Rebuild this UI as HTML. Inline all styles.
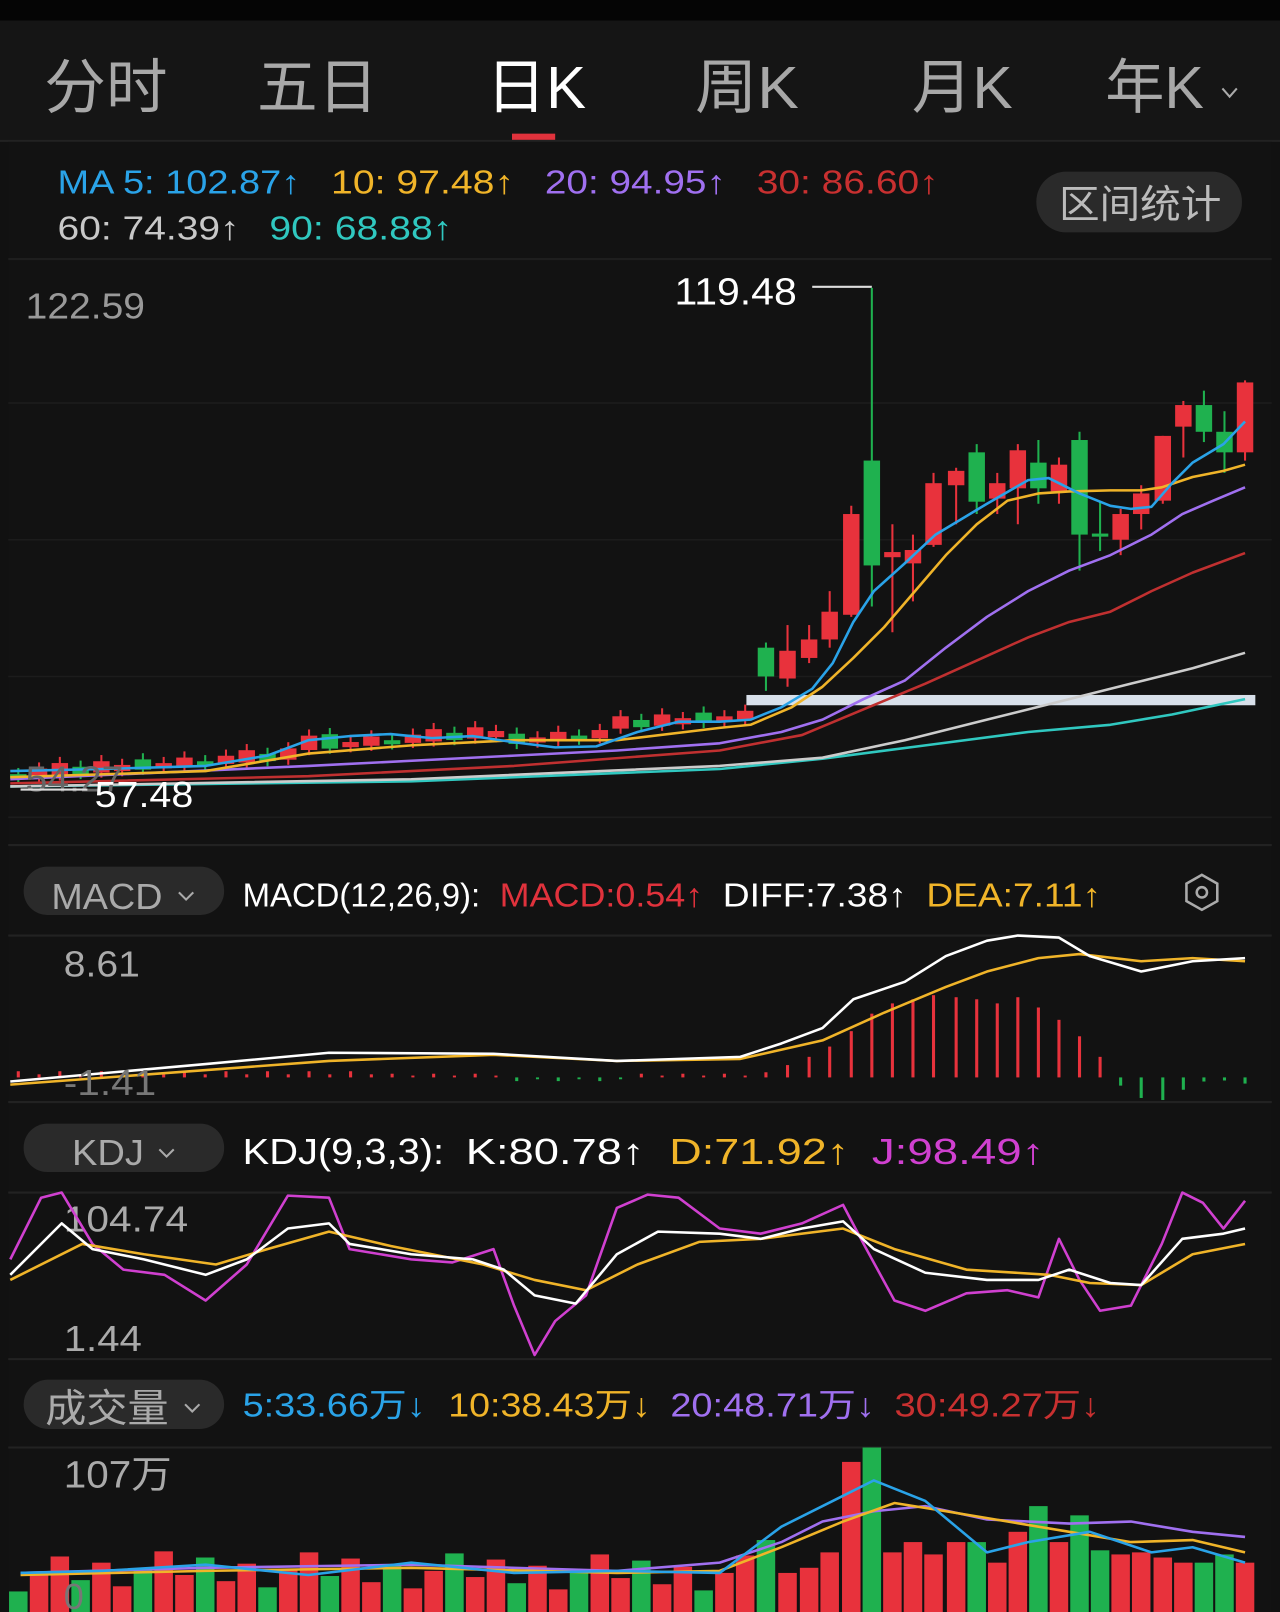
<!DOCTYPE html>
<html><head><meta charset="utf-8"><style>
html,body{margin:0;padding:0;background:#111;}
svg{display:block;}
text{font-family:"Liberation Sans","Noto Sans CJK SC",sans-serif;}
</style></head><body>
<svg id="s" width="1280" height="1612" viewBox="0 0 1245 1568" preserveAspectRatio="none" xmlns="http://www.w3.org/2000/svg">
<rect x="0" y="0" width="1245" height="1568" fill="#111111"/>
<rect x="0" y="0" width="1245" height="20" fill="#050505"/>
<rect x="0" y="20" width="1245" height="116" fill="#151515"/>
<line x1="0" y1="137" x2="1245" y2="137" fill="none" stroke="#222" stroke-width="2"/>
<g font-size="58" fill="#a8a8a8" lengthAdjust="spacingAndGlyphs">
<text x="43" y="105" textLength="120" lengthAdjust="spacingAndGlyphs">分时</text>
<text x="250" y="105" textLength="118" lengthAdjust="spacingAndGlyphs">五日</text>
<text x="473" y="105" fill="#fff" textLength="97" lengthAdjust="spacingAndGlyphs">日K</text>
<text x="676" y="105" textLength="101" lengthAdjust="spacingAndGlyphs">周K</text>
<text x="887" y="105" textLength="98" lengthAdjust="spacingAndGlyphs">月K</text>
<text x="1075" y="105" textLength="96" lengthAdjust="spacingAndGlyphs">年K</text>
</g>
<path d="M1189 86 L1196 94 L1203 86" stroke="#aaa" stroke-width="2" fill="none"/>
<rect x="498" y="130" width="42" height="6" fill="#e0323c"/>
<rect x="8" y="138" width="1229" height="1430" fill="#121212"/>
<g font-size="32">
<text x="56" y="188" fill="#2aa3e8" textLength="236" lengthAdjust="spacingAndGlyphs">MA 5: 102.87↑</text>
<text x="322" y="188" fill="#f0b429" textLength="178" lengthAdjust="spacingAndGlyphs">10: 97.48↑</text>
<text x="530" y="188" fill="#a070f0" textLength="176" lengthAdjust="spacingAndGlyphs">20: 94.95↑</text>
<text x="736" y="188" fill="#c83030" textLength="177" lengthAdjust="spacingAndGlyphs">30: 86.60↑</text>
<text x="56" y="233" fill="#c8c8c8" textLength="177" lengthAdjust="spacingAndGlyphs">60: 74.39↑</text>
<text x="262" y="233" fill="#30c8c0" textLength="178" lengthAdjust="spacingAndGlyphs">90: 68.88↑</text>
</g>
<rect x="1008" y="167" width="200" height="59" rx="29" fill="#2a2a2a"/>
<text x="1030" y="212" font-size="38" fill="#bbb" textLength="158" lengthAdjust="spacingAndGlyphs">区间统计</text>
<line x1="8" y1="252" x2="1237" y2="252" stroke="#1e1e1e" stroke-width="2"/>
<g stroke="#1c1c1c" stroke-width="1.5">
<line x1="8" y1="392" x2="1237" y2="392"/><line x1="8" y1="525" x2="1237" y2="525"/><line x1="8" y1="658" x2="1237" y2="658"/><line x1="8" y1="795" x2="1237" y2="795"/>
</g>
<line x1="8" y1="822" x2="1237" y2="822" stroke="#222" stroke-width="2"/>
<text x="25" y="310" font-size="35" fill="#999" textLength="116" lengthAdjust="spacingAndGlyphs">122.59</text>
<text x="656" y="296" font-size="37" fill="#fff" textLength="119" lengthAdjust="spacingAndGlyphs">119.48</text>
<path d="M790 279 H848" stroke="#ddd" stroke-width="2"/>
<g id="candles"></g>
<rect x="726" y="676" width="495" height="10" fill="#d8e0ea"/>
<g id="ma" fill="none" stroke-width="2.5" stroke-linejoin="round"></g>
<text x="25" y="770" font-size="35" fill="#666" textLength="95" lengthAdjust="spacingAndGlyphs">54.27</text>
<path d="M20 768 H85" stroke="#ddd" stroke-width="2"/>
<text x="92" y="785" font-size="35" fill="#fff" textLength="96" lengthAdjust="spacingAndGlyphs">57.48</text>

<rect x="23" y="843" width="195" height="47" rx="23" fill="#2a2a2a"/>
<text x="50" y="884" font-size="35" fill="#aaa" textLength="108" lengthAdjust="spacingAndGlyphs">MACD</text>
<path d="M174 868 L181 875 L188 868" stroke="#aaa" stroke-width="2" fill="none"/>
<g font-size="32">
<text x="236" y="882" fill="#fff" textLength="231" lengthAdjust="spacingAndGlyphs">MACD(12,26,9):</text>
<text x="486" y="882" fill="#e0323c" textLength="198" lengthAdjust="spacingAndGlyphs">MACD:0.54↑</text>
<text x="703" y="882" fill="#fff" textLength="179" lengthAdjust="spacingAndGlyphs">DIFF:7.38↑</text>
<text x="901" y="882" fill="#f0b429" textLength="170" lengthAdjust="spacingAndGlyphs">DEA:7.11↑</text>
</g>
<path d="M1169 851 L1184 859.5 L1184 876.5 L1169 885 L1154 876.5 L1154 859.5 Z" stroke="#aaa" stroke-width="2.5" fill="none"/>
<circle cx="1169" cy="868" r="5" stroke="#aaa" stroke-width="2.5" fill="none"/>
<line x1="8" y1="910" x2="1237" y2="910" stroke="#222" stroke-width="2"/>
<text x="62" y="950" font-size="35" fill="#aaa" textLength="74" lengthAdjust="spacingAndGlyphs">8.61</text>
<g id="macd"></g>
<text x="62" y="1065" font-size="35" fill="#777" textLength="90" lengthAdjust="spacingAndGlyphs">-1.41</text>
<line x1="8" y1="1072" x2="1237" y2="1072" stroke="#222" stroke-width="2"/>

<rect x="23" y="1093" width="195" height="47" rx="23" fill="#2a2a2a"/>
<text x="70" y="1133" font-size="35" fill="#aaa" textLength="70" lengthAdjust="spacingAndGlyphs">KDJ</text>
<path d="M155 1118 L162 1125 L169 1118" stroke="#aaa" stroke-width="2" fill="none"/>
<g font-size="35">
<text x="236" y="1132" fill="#fff" textLength="196" lengthAdjust="spacingAndGlyphs">KDJ(9,3,3):</text>
<text x="453" y="1132" fill="#fff" textLength="174" lengthAdjust="spacingAndGlyphs">K:80.78↑</text>
<text x="651" y="1132" fill="#f0b429" textLength="175" lengthAdjust="spacingAndGlyphs">D:71.92↑</text>
<text x="848" y="1132" fill="#d040d0" textLength="168" lengthAdjust="spacingAndGlyphs">J:98.49↑</text>
</g>
<line x1="8" y1="1160" x2="1237" y2="1160" stroke="#222" stroke-width="2"/>
<text x="62" y="1198" font-size="35" fill="#aaa" textLength="121" lengthAdjust="spacingAndGlyphs">104.74</text>
<text x="62" y="1314" font-size="35" fill="#aaa" textLength="76" lengthAdjust="spacingAndGlyphs">1.44</text>
<g id="kdj" fill="none" stroke-width="2.5"></g>
<line x1="8" y1="1322" x2="1237" y2="1322" stroke="#222" stroke-width="2"/>

<rect x="23" y="1342" width="195" height="48" rx="24" fill="#2a2a2a"/>
<text x="44" y="1383" font-size="38" fill="#aaa" textLength="120" lengthAdjust="spacingAndGlyphs">成交量</text>
<path d="M180 1366 L187 1373 L194 1366" stroke="#aaa" stroke-width="2" fill="none"/>
<g font-size="32">
<text x="236" y="1378" fill="#2aa3e8" textLength="178" lengthAdjust="spacingAndGlyphs">5:33.66万↓</text>
<text x="436" y="1378" fill="#f0b429" textLength="197" lengthAdjust="spacingAndGlyphs">10:38.43万↓</text>
<text x="652" y="1378" fill="#a070f0" textLength="199" lengthAdjust="spacingAndGlyphs">20:48.71万↓</text>
<text x="870" y="1378" fill="#c83030" textLength="200" lengthAdjust="spacingAndGlyphs">30:49.27万↓</text>
</g>
<line x1="8" y1="1408" x2="1237" y2="1408" stroke="#222" stroke-width="2"/>
<g id="vol"></g>
<text x="62" y="1447" font-size="37" fill="#aaa" textLength="105" lengthAdjust="spacingAndGlyphs">107万</text>
<text x="62" y="1565" font-size="35" fill="#777">0</text>
</svg>
<script>
var NS="http://www.w3.org/2000/svg";
function el(p,t,a){var e=document.createElementNS(NS,t);for(var k in a)e.setAttribute(k,a[k]);document.getElementById(p).appendChild(e);return e;}
var R="#e8323c",G="#1fb14f";
var right=[[745,'g',630,658,625,672],[766,'r',633,660,608,668],[787,'r',622,640,608,645],[807,'r',595,622,575,630],[828,'r',500,598,492,600],[848,'g',448,550,280,590],[868,'r',537,542,510,615],[888,'r',535,548,520,585],[908,'r',470,530,460,532],[930,'r',458,472,455,510],[950,'g',440,488,432,500],[970,'r',470,485,460,500],[990,'r',438,475,432,510],[1010,'g',450,475,428,490],[1030,'r',452,478,445,490],[1050,'g',428,520,420,555],[1070,'g',519,522,488,536],[1090,'r',500,525,495,540],[1110,'r',480,500,472,515],[1131,'r',424,487,424,490],[1151,'r',394,415,390,445],[1171,'g',394,420,380,430],[1191,'g',420,440,400,460],[1211,'r',372,440,370,448]];
var cs=[];
var sp=20.2;
for(var i=0;i<36;i++){
 var x=745-(36-i)*sp;
 var base=757-(i/36)*50 - (i>13&&i<24?8:0) - (i>28?8:0);
 var c=(i*7%3==0)?'g':'r';
 var h=4+(i*13%9);
 if(i==14||i==15)h=14;
 cs.push([x,c,base-h,base,base-h-6,base+5]);
}
cs=cs.concat(right);
cs.forEach(function(d,i){
 var col=d[1]=='r'?R:G;
 el('candles','line',{x1:d[0],x2:d[0],y1:d[4],y2:d[5],stroke:col,'stroke-width':2});
 el('candles','rect',{x:d[0]-8,y:d[2],width:16,height:Math.max(2,d[3]-d[2]),fill:col});
 var v;
 if(i<36){v=1568-(20+((i*17)%40));}else{v=[1498,1530,1525,1510,1422,1408,1510,1500,1512,1500,1500,1520,1490,1465,1500,1474,1508,1512,1510,1515,1520,1520,1512,1520][i-36];}
 el('vol','rect',{x:d[0]-9,y:v,width:18,height:1568-v,fill:col});
});
function pl(g,pts,col){el(g,'polyline',{points:pts,stroke:col,fill:'none','stroke-width':2.5,'stroke-linejoin':'round'});}
pl('ma',"10,765 400,760 700,748 800,738 900,725 1000,712 1080,705 1140,695 1211,680","#30c8c0");
pl('ma',"10,765 400,758 700,745 800,737 880,720 960,700 1040,680 1100,665 1160,650 1211,635","#cccccc");
pl('ma',"10,762 300,755 500,745 700,730 780,715 840,690 900,665 960,638 1000,620 1040,605 1080,595 1120,575 1160,557 1211,538","#c03030");
pl('ma',"10,758 300,745 500,735 600,730 700,723 760,712 800,700 840,680 880,662 920,630 960,600 1000,575 1040,555 1080,540 1120,520 1150,500 1180,487 1211,474","#a070f0");
pl('ma',"10,756 200,750 300,733 400,725 500,720 600,720 700,708 730,705 770,688 800,668 830,640 860,610 890,575 920,540 950,510 980,487 1010,480 1040,478 1080,477 1110,477 1130,474 1160,464 1190,458 1211,452","#f0b429");
pl('ma',"10,750 100,748 200,745 260,735 300,720 340,716 380,714 420,718 460,716 500,722 540,727 580,726 620,712 660,702 700,702 730,700 760,688 790,670 810,645 830,605 850,575 880,548 910,520 940,502 960,490 1000,467 1020,465 1050,480 1080,492 1100,495 1120,493 1140,470 1160,450 1190,432 1211,410","#2aa3e8");
cs.forEach(function(d,i){
 var x=d[0],h,col;
 if(i<36){h=(i%2?3:6)*(i<18?1:0.6);col=i>23&&i<30?G:R;if(i>23&&i<30){el('macd','rect',{x:x-1.5,y:1048,width:3,height:h,fill:col});return;}}
 else{var hs=[5,12,20,30,45,62,72,76,80,78,76,72,78,68,56,40,20,-8,-20,-22,-12,-4,-3,-6];h=hs[i-36];col=h<0?G:R;
  if(h<0){el('macd','rect',{x:x-1.5,y:1048,width:3,height:-h,fill:col});return;}}
 el('macd','rect',{x:x-1.5,y:1048-h,width:3,height:h,fill:col});
});
pl('macd',"10,1055 320,1032 480,1026 600,1032 720,1030 800,1012 860,985 920,960 960,945 1010,932 1050,928 1110,935 1160,932 1211,935","#f0b429");
pl('macd',"10,1052 200,1035 320,1024 480,1025 600,1032 720,1028 760,1015 800,1000 830,972 880,955 920,930 960,915 990,910 1030,912 1060,930 1110,945 1160,935 1211,932","#ffffff");
pl('kdj',"10,1225 40,1165 60,1160 90,1210 120,1235 160,1240 200,1265 240,1230 280,1163 320,1165 340,1215 400,1225 440,1228 480,1215 500,1270 520,1318 540,1285 570,1260 600,1175 630,1162 660,1165 700,1195 740,1200 780,1190 820,1172 840,1210 870,1265 900,1275 940,1258 980,1255 1010,1262 1030,1205 1050,1245 1070,1275 1100,1270 1130,1210 1150,1160 1170,1170 1190,1195 1211,1168","#d040d0");
pl('kdj',"10,1245 80,1210 140,1220 210,1230 260,1215 320,1198 380,1212 470,1230 520,1245 570,1255 620,1230 680,1208 740,1205 820,1195 870,1215 940,1235 1020,1240 1060,1248 1110,1250 1160,1220 1211,1210","#f0b429");
pl('kdj',"10,1240 60,1190 90,1215 140,1225 200,1240 240,1225 280,1195 320,1190 340,1210 400,1220 460,1225 490,1235 520,1260 560,1268 600,1220 640,1198 700,1200 740,1205 780,1195 820,1188 850,1215 900,1238 960,1245 1010,1245 1040,1235 1080,1248 1110,1250 1150,1205 1190,1200 1211,1195","#ffffff");
pl('vol',"20,1530 200,1525 400,1522 600,1528 700,1520 760,1500 800,1480 850,1470 900,1465 960,1478 1040,1482 1100,1480 1160,1490 1211,1495","#a070f0");
pl('vol',"20,1532 200,1528 400,1525 600,1530 700,1528 760,1505 820,1480 870,1462 920,1470 980,1480 1040,1490 1100,1500 1160,1498 1211,1510","#f0b429");
pl('vol',"20,1530 100,1528 200,1522 300,1532 400,1520 500,1530 600,1528 700,1530 760,1485 820,1455 850,1440 900,1460 960,1510 1000,1500 1060,1490 1120,1510 1160,1505 1211,1520","#2aa3e8");
</script>
</body></html>
